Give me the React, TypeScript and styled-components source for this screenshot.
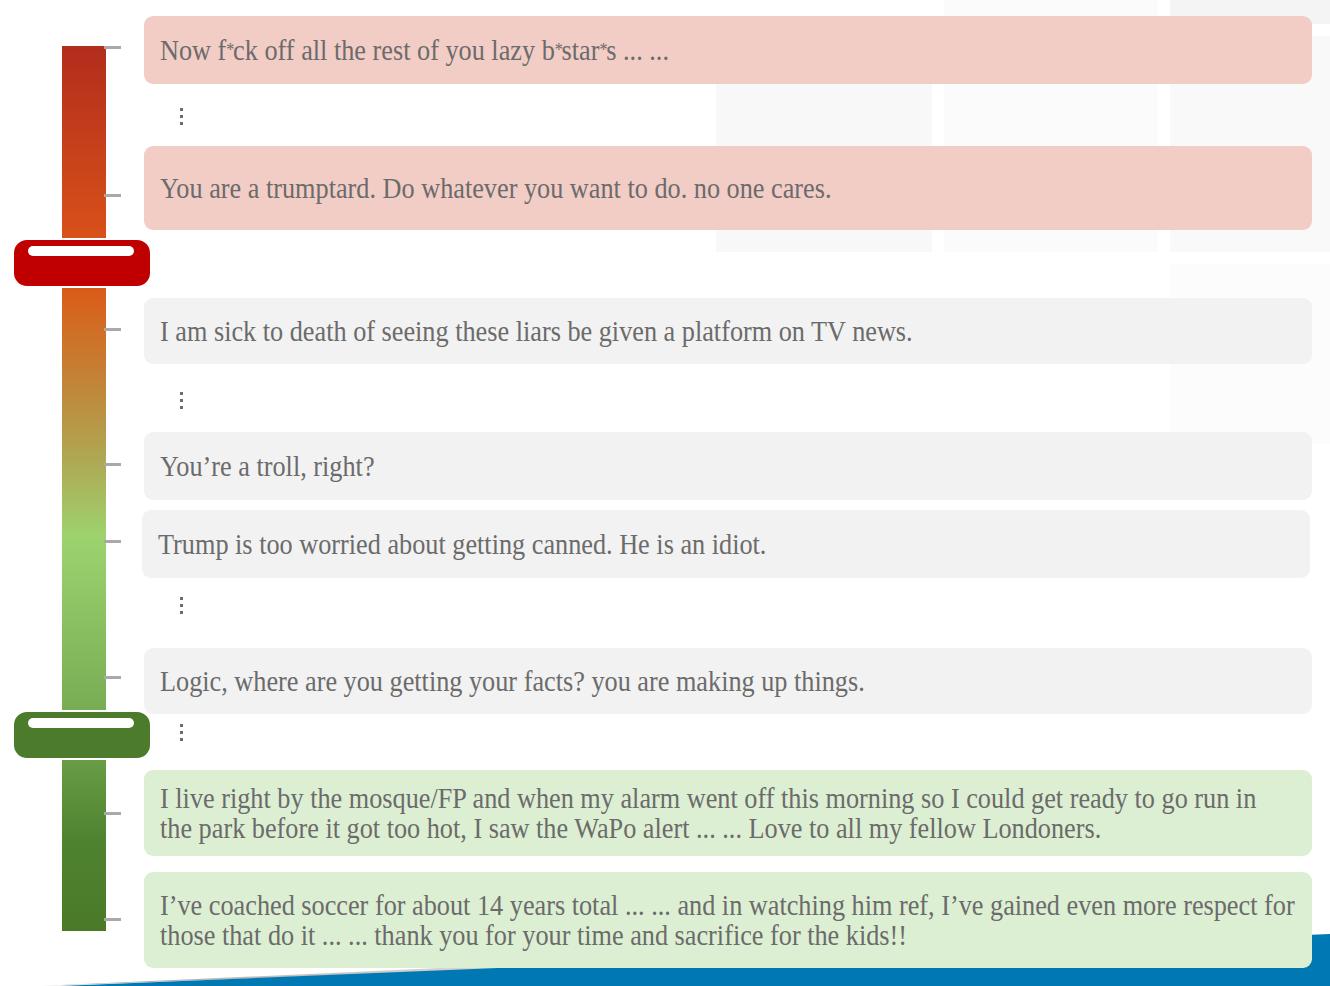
import React from "react";
import styled, { createGlobalStyle } from "styled-components";

const TEXT_SCALE = 0.905;

const GlobalStyle = createGlobalStyle`
  html, body {
    margin: 0;
    padding: 0;
    background: #ffffff;
  }
  body {
    font-family: "Liberation Serif", "Times New Roman", serif;
    overflow: hidden;
  }
`;

type Tone = "red" | "neutral" | "green";

const toneColors: Record<Tone, string> = {
  red: "#f2cdc6",
  neutral: "#f2f2f2",
  green: "#ddefd3",
};

/* ---------- page frame ---------- */

const Page = styled.div`
  position: relative;
  width: 1330px;
  height: 986px;
  overflow: hidden;
`;

const Backdrop = styled.div`
  position: absolute;
  inset: 0;
  z-index: 0;
  pointer-events: none;
`;

const Tile = styled.div<{ $shade: string }>`
  position: absolute;
  background: ${(p) => p.$shade};
`;

const Band = styled.svg`
  position: absolute;
  left: 0;
  bottom: 0;
  width: 1330px;
  height: 70px;
`;

const Layout = styled.div`
  position: relative;
  z-index: 1;
  display: grid;
  grid-template-columns: 144px minmax(0, 1fr);
  padding-right: 18px;
`;

/* ---------- score rail ---------- */

const RailColumn = styled.div`
  padding-top: 46px;
  padding-left: 62px;
`;

const Track = styled.div`
  position: relative;
  width: 44px;
  height: 885px;
  background: linear-gradient(
    to bottom,
    #b22d1c 0%,
    #d8511a 21.7%,
    #db5b18 27.4%,
    #d06e26 32%,
    #bd8c3e 40%,
    #aeaa55 47.3%,
    #9dd36e 55.5%,
    #7aaf56 73.9%,
    #4f822f 90%,
    #4a7a28 100%
  );
`;

const Tick = styled.span`
  position: absolute;
  left: 42px;
  width: 17px;
  height: 3px;
  background: #a9a9a9;
`;

const Handle = styled.div<{ $color: string }>`
  position: absolute;
  left: -50px;
  width: 140px;
  height: 50px;
  box-sizing: border-box;
  border: 2px solid #ffffff;
  border-radius: 15px;
  background: ${(p) => p.$color};
  padding: 6px 14px 0;
`;

const Grip = styled.div`
  width: 106px;
  height: 10px;
  border-radius: 5px;
  background: #ffffff;
`;

/* ---------- comment list ---------- */

const List = styled.div`
  display: flex;
  flex-direction: column;
  min-width: 0;
`;

const Card = styled.div<{ $tone: Tone; $height: number; $gap: number; $shift?: number }>`
  box-sizing: border-box;
  display: flex;
  align-items: center;
  min-width: 0;
  min-height: ${(p) => p.$height}px;
  margin-top: ${(p) => p.$gap}px;
  margin-left: ${(p) => -(p.$shift ?? 0)}px;
  margin-right: ${(p) => p.$shift ?? 0}px;
  padding: 0 14px 0 16px;
  border-radius: 9px;
  background: ${(p) => toneColors[p.$tone]};
`;

const Comment = styled.p`
  flex: 0 0 auto;
  margin: 0;
  width: calc(100% / ${TEXT_SCALE});
  transform: scaleX(${TEXT_SCALE});
  transform-origin: left center;
  font-family: "Liberation Serif", "Times New Roman", serif;
  font-size: 29px;
  line-height: 30px;
  color: #6b6b6b;
`;

const Line = styled.span`
  display: block;
`;

/* censored letters are set as small raised stars */
const Star = styled.span`
  font-size: 18px;
  letter-spacing: -1.5px;
  vertical-align: 4px;
  line-height: 0;
`;

const Ellipsis = styled.div<{ $gap: number }>`
  display: flex;
  flex-direction: column;
  gap: 4px;
  margin-top: ${(p) => p.$gap}px;
  margin-left: 36px;
  width: 3px;
`;

const Dot = styled.span`
  display: block;
  width: 3px;
  height: 3px;
  background: #6d6d6d;
`;

type Entry =
  | { kind: "card"; tone: Tone; height: number; gap: number; shift?: number; lines: string[] }
  | { kind: "more"; gap: number };

const entries: Entry[] = [
  { kind: "card", tone: "red", height: 68, gap: 16, lines: ["Now f*ck off all the rest of you lazy b*star*s ... ..."] },
  { kind: "more", gap: 24 },
  { kind: "card", tone: "red", height: 84, gap: 21, lines: ["You are a trumptard. Do whatever you want to do. no one cares."] },
  { kind: "card", tone: "neutral", height: 66, gap: 68, lines: ["I am sick to death of seeing these liars be given a platform on TV news."] },
  { kind: "more", gap: 28 },
  { kind: "card", tone: "neutral", height: 68, gap: 23, lines: ["You\u2019re a troll, right?"] },
  { kind: "card", tone: "neutral", height: 68, gap: 10, shift: 2, lines: ["Trump is too worried about getting canned. He is an idiot."] },
  { kind: "more", gap: 19 },
  { kind: "card", tone: "neutral", height: 66, gap: 34, lines: ["Logic, where are you getting your facts? you are making up things."] },
  { kind: "more", gap: 10 },
  {
    kind: "card",
    tone: "green",
    height: 86,
    gap: 29,
    lines: [
      "I live right by the mosque/FP and when my alarm went off this morning so I could get ready to go run in",
      "the park before it got too hot, I saw the WaPo alert ... ... Love to all my fellow Londoners.",
    ],
  },
  {
    kind: "card",
    tone: "green",
    height: 96,
    gap: 16,
    lines: [
      "I\u2019ve coached soccer for about 14 years total ... ... and in watching him ref, I\u2019ve gained even more respect for",
      "those that do it ... ... thank you for your time and sacrifice for the kids!!",
    ],
  },
];

function renderText(text: string) {
  return text.split(/(\*)/).map((part, i) =>
    part === "*" ? <Star key={i}>*</Star> : <React.Fragment key={i}>{part}</React.Fragment>
  );
}

const ticks = [0, 148, 282, 417, 494, 630, 766, 872];

const handles = [
  { top: 192, color: "#c00000" },
  { top: 664, color: "#4b7b2b" },
];

const tiles = [
  { left: 716, top: 84, width: 216, height: 168, shade: "#f8f8f8" },
  { left: 944, top: 0, width: 214, height: 252, shade: "#fbfbfb" },
  { left: 1170, top: 0, width: 160, height: 24, shade: "#f4f4f4" },
  { left: 1170, top: 36, width: 160, height: 216, shade: "#f9f9f9" },
  { left: 1170, top: 264, width: 160, height: 180, shade: "#fcfcfc" },
];

export default function App() {
  return (
    <>
      <GlobalStyle />
      <Page>
        <Backdrop>
          {tiles.map((t, i) => (
            <Tile
              key={i}
              $shade={t.shade}
              style={{ left: t.left, top: t.top, width: t.width, height: t.height }}
            />
          ))}
          <Band viewBox="0 0 1330 70" preserveAspectRatio="none">
            <defs>
              <linearGradient id="bandShade" x1="0" y1="0" x2="0" y2="1">
                <stop offset="0" stopColor="#ffffff" stopOpacity="0" />
                <stop offset="1" stopColor="#9a9a9a" stopOpacity="0.9" />
              </linearGradient>
            </defs>
            <polygon points="40,70 1330,12 1330,24 40,70" fill="url(#bandShade)" />
            <polygon points="60,70 1330,18 1330,70" fill="#0078b4" />
          </Band>
        </Backdrop>

        <Layout>
          <RailColumn>
            <Track>
              {ticks.map((y) => (
                <Tick key={y} style={{ top: y }} />
              ))}
              {handles.map((h) => (
                <Handle key={h.top} $color={h.color} style={{ top: h.top }}>
                  <Grip />
                </Handle>
              ))}
            </Track>
          </RailColumn>

          <List>
            {entries.map((e, i) =>
              e.kind === "card" ? (
                <Card key={i} $tone={e.tone} $height={e.height} $gap={e.gap} $shift={e.shift}>
                  <Comment>
                    {e.lines.map((l, j) => (
                      <Line key={j}>{renderText(l)}</Line>
                    ))}
                  </Comment>
                </Card>
              ) : (
                <Ellipsis key={i} $gap={e.gap}>
                  <Dot />
                  <Dot />
                  <Dot />
                </Ellipsis>
              )
            )}
          </List>
        </Layout>
      </Page>
    </>
  );
}
